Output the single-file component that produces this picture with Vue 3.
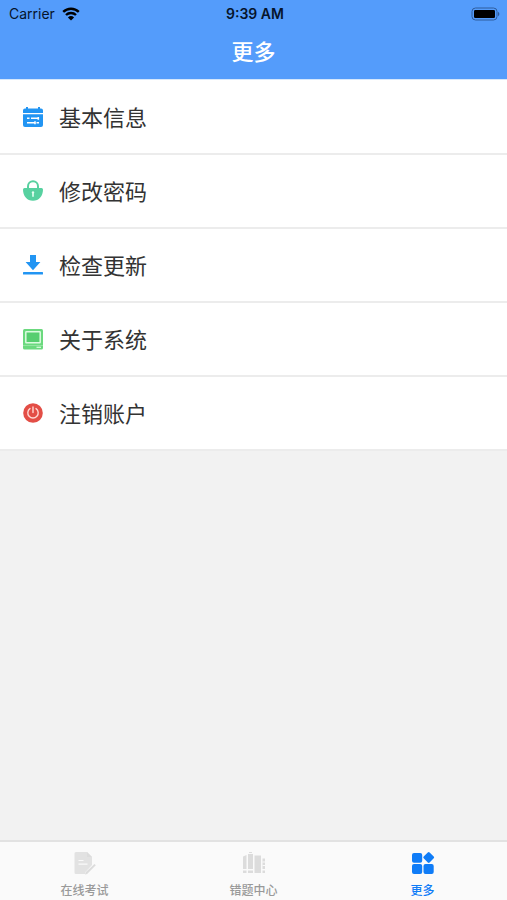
<template>
  <div class="screen">
    <header class="header">
      <div class="status-bar">
        <div class="carrier">
          <span>Carrier</span>
          <svg class="wifi" viewBox="0 0 18 14" aria-hidden="true">
            <path d="M1.2 4.9a11.2 11.2 0 0 1 15.6 0" />
            <path d="M4 8a7.2 7.2 0 0 1 10 0" />
            <path class="wifi-dot" d="M9 13.6 5.9 10.5a4.6 4.6 0 0 1 6.2 0z" />
          </svg>
        </div>
        <time class="time">9:39 AM</time>
        <svg class="battery" viewBox="0 0 30 14" aria-hidden="true">
          <rect class="battery-case" x="1" y="1" width="25" height="12" rx="3.5" />
          <rect x="3" y="3" width="21" height="8" rx="1.2" />
          <path class="battery-tip" d="M27 4.7a2.6 2.6 0 0 1 0 4.6z" />
        </svg>
      </div>
      <h1 class="title">更多</h1>
    </header>

    <main class="content">
      <ul class="menu">
        <li v-for="item in items" :key="item.icon">
          <button type="button" class="menu-item">
            <svg v-if="item.icon === 'info'" class="icon" viewBox="0 0 22 22" aria-hidden="true">
              <path fill="#2295f3" d="M3 2.5h1V1h2v1.5h10V1h2v1.5h1a2 2 0 0 1 2 2V7H1V4.5a2 2 0 0 1 2-2z" />
              <path fill="#2295f3" d="M1 8.2h20V19a2 2 0 0 1-2 2H3a2 2 0 0 1-2-2z" />
              <path stroke="#fff" stroke-width="1.6" d="M5 12.3h2.5M9 12.3h8M5 16.8h8M14.5 16.8H17M16.3 11v2.8M13 15.3v3" />
            </svg>
            <svg v-else-if="item.icon === 'lock'" class="icon" viewBox="0 0 22 22" aria-hidden="true">
              <path fill="none" stroke="#57d1a0" stroke-width="2" d="M6 9V6.2a5 5 0 0 1 10 0V9" />
              <path fill="#57d1a0" d="M2.5 8h17A1.5 1.5 0 0 1 21 9.5C21 16 17 20.8 11 20.8S1 16 1 9.500A1.5 1.5 0 0 1 2.5 8z" />
              <path fill="#e4fff2" d="M11 11.2a1.3 1.3 0 0 1 .8 2.300v3.3h-1.6v-3.3a1.3 1.3 0 0 1 .8-2.300z" />
            </svg>
            <svg v-else-if="item.icon === 'download'" class="icon" viewBox="0 0 22 22" aria-hidden="true">
              <path fill="#2295f3" d="M8 1h6v7h4.400L11 16.200 3.600 8H8z" />
              <rect fill="#2295f3" x="1" y="18" width="20" height="2.6" rx=".5" />
            </svg>
            <svg v-else-if="item.icon === 'system'" class="icon" viewBox="0 0 22 22" aria-hidden="true">
              <rect fill="#6bd97e" x="1" y="1" width="20" height="20.5" rx="1.5" />
              <rect fill="#57ce70" stroke="#dcfbe0" stroke-width="1.5" x="3.8" y="3.8" width="14.4" height="11" rx=".5" />
              <path stroke="#dcfbe0" d="M1 17.500h20" opacity=".35" />
              <path stroke="#dcfbe0" stroke-width="1.2" d="M14.5 19.300H19" />
            </svg>
            <svg v-else class="icon" viewBox="0 0 22 22" aria-hidden="true">
              <circle fill="#e34e46" cx="11" cy="11" r="9.8" />
              <path
                fill="none" stroke="#ffd8d3" stroke-width="1.4" stroke-linecap="round"
                d="M11 5v5.5M8 6.6a5.2 5.2 0 1 0 6 0"
              />
            </svg>
            <span class="label">{{ item.label }}</span>
          </button>
        </li>
      </ul>
    </main>

    <nav class="tab-bar">
      <a
        v-for="tab in tabs"
        :key="tab.icon"
        class="tab"
        :class="{ active: tab.icon === activeTab }"
        :href="'#' + tab.icon"
        @click.prevent="activeTab = tab.icon"
      >
        <svg v-if="tab.icon === 'exam'" class="tab-icon" viewBox="0 0 24 24" aria-hidden="true">
          <path class="soft" d="M3 1h11l5 5v8l-7 7.5V23H3a1.5 1.5 0 0 1-1.5-1.5v-19A1.5 1.5 0 0 1 3 1z" />
          <path d="M14 1v5h5zM12 23.500l.6-2.200 8.900-8.300 1.300 1.300-8.700 8.700z" />
          <path class="cut" d="M5.5 9.5h5M5.5 13.2h9" />
        </svg>
        <svg v-else-if="tab.icon === 'mistakes'" class="tab-icon" viewBox="0 0 24 24" aria-hidden="true">
          <path d="M1 5.5 4.5 4v14H1zM6 3h5v15H6zM12.5 4.500H19V22h-6.500zM20.5 7.5H23V18h-2.500z" />
          <path d="M1 19.5h3.5V22H1zM6 19.5h5V22H6zM20.5 19.5H23V22h-2.500zM7 1h3v1H7z" />
          <path class="cut" d="M20.5 11H23M20.5 14.5H23" />
        </svg>
        <svg v-else class="tab-icon" viewBox="0 0 24 24" aria-hidden="true">
          <rect x="1" y="2" width="10.2" height="9.8" rx="2" />
          <rect x="1" y="13" width="10.2" height="10" rx="2" />
          <rect x="12.5" y="13" width="10.2" height="10" rx="2" />
          <rect x="13.5" y="2.2" width="8.4" height="8.4" rx="1.3" transform="rotate(45 17.7 6.4)" />
        </svg>
        <span>{{ tab.label }}</span>
      </a>
    </nav>
  </div>
</template>

<script setup>
import { ref } from 'vue'

const items = [
  { icon: 'info', label: '基本信息' },
  { icon: 'lock', label: '修改密码' },
  { icon: 'download', label: '检查更新' },
  { icon: 'system', label: '关于系统' },
  { icon: 'power', label: '注销账户' },
]

const tabs = [
  { icon: 'exam', label: '在线考试' },
  { icon: 'mistakes', label: '错题中心' },
  { icon: 'more', label: '更多' },
]

const activeTab = ref('more')
</script>

<style>
body {
  margin: 0;
  background: #f2f2f2;
}
</style>

<style scoped>
.screen {
  min-height: 100vh;
  display: flex;
  flex-direction: column;
  background: #f2f2f2;
  color: #333;
  font-family: Inter, 'Noto Sans CJK SC', sans-serif;
}

.header {
  background: #549cfb;
  border-bottom: 1px solid #d5e7fc;
}

.status-bar {
  display: grid;
  grid-template-columns: 1fr auto 1fr;
  align-items: center;
  height: 27px;
  padding: 0 6px 0 9px;
  color: #06142b;
  font-size: 14px;
}

.carrier {
  display: flex;
  align-items: center;
  gap: 7px;
}

.wifi {
  width: 18px;
  height: 14px;
  fill: none;
  stroke: #000;
  stroke-width: 2.4;
}
.wifi-dot {
  fill: #000;
  stroke: none;
}

.time {
  font-weight: 600;
}

.battery {
  justify-self: end;
  width: 30px;
  height: 14px;
}
.battery-case {
  fill: none;
  stroke: #2f5c9c;
}
.battery-tip {
  fill: #2f5c9c;
}

.title {
  margin: 0;
  padding-bottom: 2px;
  color: #fff;
  font-size: 22px;
  font-weight: 500;
  line-height: 50px;
  text-align: center;
}

.content {
  flex: 1;
}

.menu {
  margin: 0;
  padding: 1px 0 0;
  background: #fff;
  list-style: none;
}

.menu-item {
  display: flex;
  align-items: center;
  gap: 15px;
  width: 100%;
  height: 74px;
  padding: 0 22px;
  border: 0;
  border-bottom: 2px solid #ececec;
  background: #fff;
  color: #333;
  font: inherit;
  font-size: 22px;
  text-align: left;
}

.icon {
  width: 22px;
  height: 22px;
  flex-shrink: 0;
}

.label {
  padding-bottom: 3px;
}

.tab-bar {
  display: flex;
  border-top: 2px solid #e2e2e2;
  background: #fafafa;
}

.tab {
  flex: 1;
  display: flex;
  flex-direction: column;
  align-items: center;
  gap: 8px;
  padding: 9px 0 1px;
  color: #999;
  font-size: 12px;
  font-weight: 500;
  line-height: 16px;
  text-decoration: none;
}
.tab.active {
  color: #0f7cf7;
}

.tab-icon {
  width: 24px;
  height: 24px;
  fill: #dcdcdc;
}
.tab.active .tab-icon {
  fill: #0f7cf7;
}
.soft {
  opacity: 0.8;
}
.cut {
  fill: none;
  stroke: #fafafa;
  stroke-width: 1.2;
}
</style>
